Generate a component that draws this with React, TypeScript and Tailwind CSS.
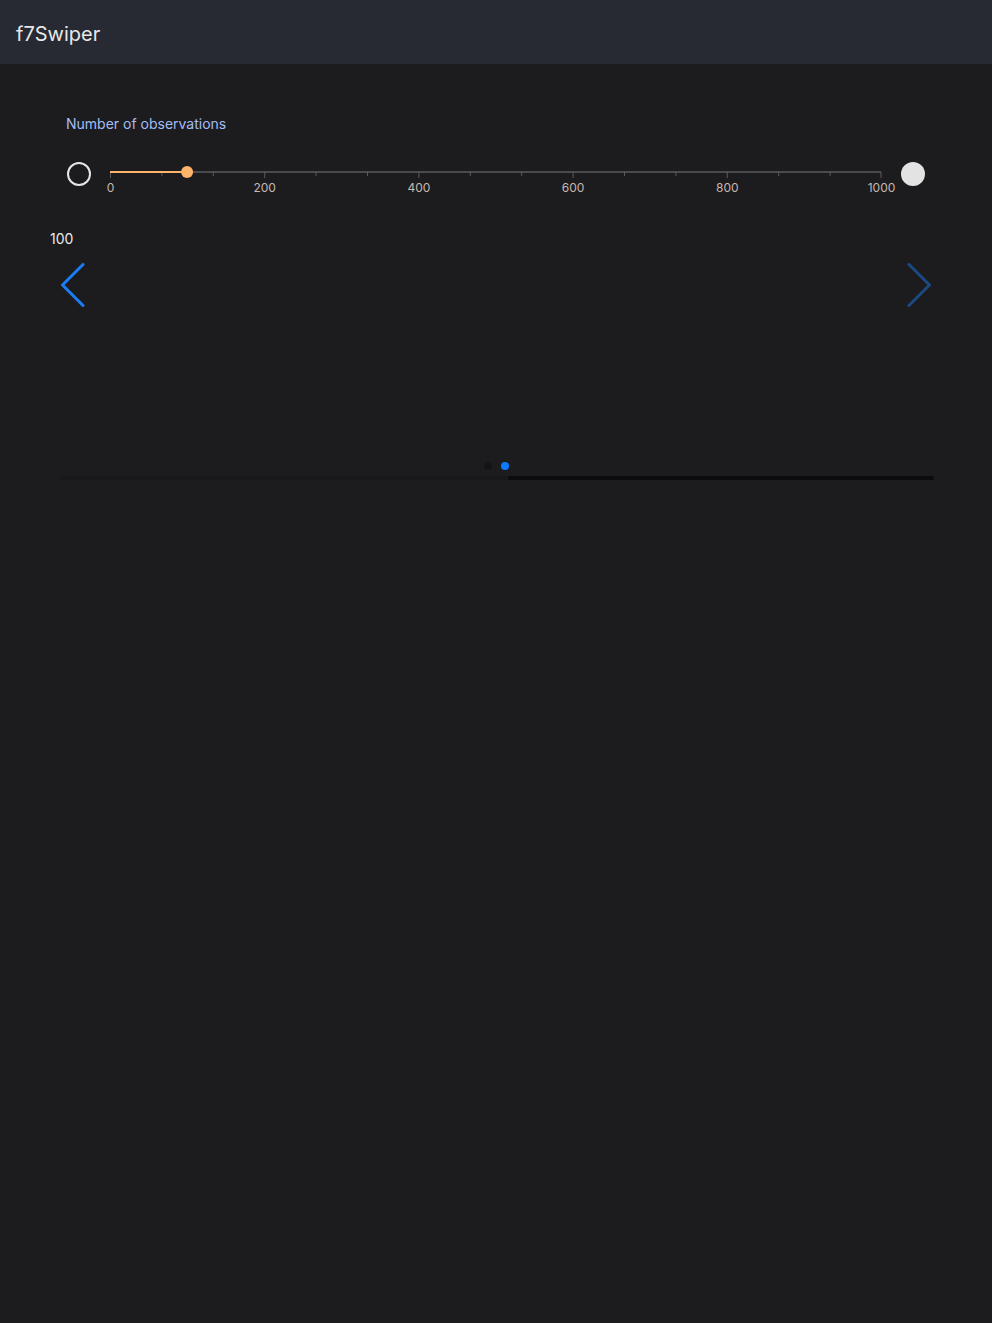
import React from "react";

const TRACK_W = 771;

const Slider: React.FC<{ value: number; max: number }> = ({ value, max }) => {
  const pos = (value / max) * TRACK_W;
  const ticks = Array.from({ length: 16 }, (_, i) => i);
  const labels = [0, 200, 400, 600, 800, 1000];
  return (
    <div className="flex items-start h-[40px]">
      <div className="ml-[1px] w-[24px] h-[24px] rounded-full border-2 border-[#e6e6e6] shrink-0" />
      <div className="relative ml-[19px] h-[40px] w-[771px] shrink-0">
        <svg width={TRACK_W + 2} height={14} className="absolute left-0 top-[7px] overflow-visible">
          <line x1={0} y1={3} x2={TRACK_W} y2={3} stroke="#4a4a4e" strokeWidth={2} />
          {ticks.map((i) => {
            const x = Math.min((i / 15) * TRACK_W, TRACK_W - 0.5) + 0.5;
            const major = i % 3 === 0;
            return <line key={i} x1={x} y1={3} x2={x} y2={major ? 9 : 7} stroke="#5a5a5e" strokeWidth={1} />;
          })}
          <line x1={0} y1={3} x2={pos} y2={3} stroke="#ffb46c" strokeWidth={2} />
          <circle cx={pos} cy={3} r={6} fill="#ffb46c" />
        </svg>
        {labels.map((l) => (
          <span
            key={l}
            className="absolute top-[19px] -translate-x-1/2 text-[12px] leading-[14px] text-[#c8b8ae]"
            style={{ left: (l / max) * TRACK_W + 0.5 }}
          >
            {l}
          </span>
        ))}
      </div>
      <div className="ml-[20px] w-[24px] h-[24px] rounded-full bg-[#e3e3e3] shrink-0" />
    </div>
  );
};

const Chevron: React.FC<{ dir: "left" | "right"; color: string }> = ({ dir, color }) => (
  <svg width={27} height={44} viewBox="0 0 27 44" fill="none">
    <path
      d={dir === "left" ? "M22 1.5 L1.5 22 L22 42.5" : "M5 1.5 L25.5 22 L5 42.5"}
      stroke={color}
      strokeWidth={3}
      strokeLinecap="round"
      strokeLinejoin="round"
    />
  </svg>
);

export default function App() {
  return (
    <div className="min-h-[1323px] bg-[#1c1c1f] font-['Inter','Liberation_Sans',sans-serif] text-[#e6e6e6]">
      <header className="h-[64px] bg-[#272a32] flex items-center px-[16px] pt-[3px]">
        <h1 className="text-[20px] text-[#e8e8e8] font-normal">f7Swiper</h1>
      </header>

      <main className="px-[50px] pt-[51px]">
        <div className="pl-[16px]">
          <div className="text-[14px] leading-[18px] text-[#a3bdf5]">Number of observations</div>
          <div className="mt-[29px]">
            <Slider value={100} max={1000} />
          </div>
        </div>

        <div className="relative mt-[27px] h-[252px]">
          <div className="text-[14px] leading-[20px] text-[#eaeaea]">100</div>

          <div className="absolute left-[11px] top-[34px]">
            <Chevron dir="left" color="#1a7df5" />
          </div>
          <div className="absolute right-[11px] top-[34px]">
            <Chevron dir="right" color="#1b4a82" />
          </div>

          <div className="absolute left-0 right-0 top-[233px] flex justify-center gap-[9px]">
            <span className="w-[8px] h-[8px] rounded-full bg-[#141417]" />
            <span className="w-[8px] h-[8px] rounded-full bg-[#0a7aff]" />
          </div>

          <div className="absolute left-[10px] w-[874px] top-[247px] h-[4px] rounded-full bg-[#18181b]">
            <div className="ml-[448px] w-[426px] h-full rounded-full bg-[#0c0c0e]" />
          </div>
        </div>
      </main>
    </div>
  );
}
